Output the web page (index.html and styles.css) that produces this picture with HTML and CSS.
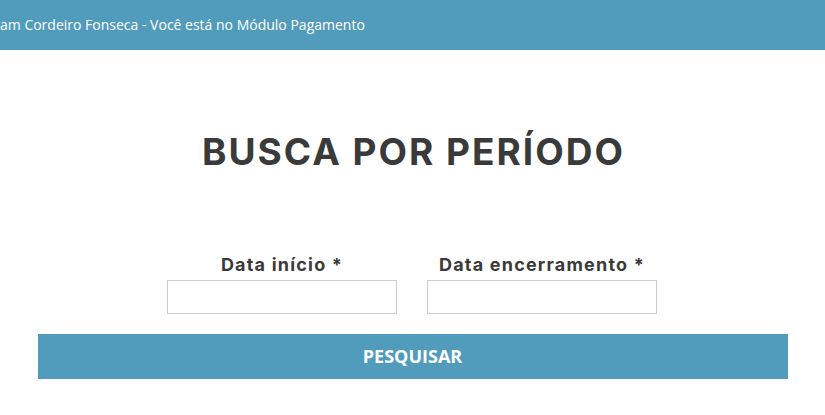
FILE: index.html
```html
<!DOCTYPE html>
<html lang="pt-BR">
<head>
<meta charset="utf-8">
<title>Busca por período</title>
<link rel="stylesheet" href="styles.css">
</head>
<body>
<header class="topbar">
  <span class="topbar-text">am Cordeiro Fonseca - Você está no Módulo Pagamento</span>
</header>
<main class="content">
  <h1 class="title">BUSCA POR PERÍODO</h1>
  <form class="search-form">
    <div class="fields">
      <div class="field">
        <label class="field-label" for="inicio">Data início *</label>
        <input class="field-input" id="inicio" type="text">
      </div>
      <div class="field">
        <label class="field-label" for="fim">Data encerramento *</label>
        <input class="field-input" id="fim" type="text">
      </div>
    </div>
    <button class="submit" type="button">PESQUISAR</button>
  </form>
</main>
</body>
</html>
```
FILE: styles.css
```css
html, body {
  margin: 0;
  padding: 0;
  background: #ffffff;
}
body {
  font-family: "Open Sans", "Liberation Sans", sans-serif;
  overflow: hidden;
}
.topbar {
  height: 50px;
  background: #519bbc;
  display: flex;
  align-items: center;
  white-space: nowrap;
}
.topbar-text {
  color: #ffffff;
  font-size: 14px;
  padding-bottom: 2px;
}
.content {
  display: flex;
  flex-direction: column;
  align-items: center;
}
.title {
  margin: 80px 0 0;
  font-family: Inter, "Noto Sans", sans-serif;
  font-weight: 700;
  font-size: 37px;
  line-height: 44px;
  color: #3a3a3a;
  letter-spacing: 2px;
  padding-left: 2px;
}
.search-form {
  margin-top: 80px;
  display: flex;
  flex-direction: column;
  align-items: center;
}
.fields {
  display: flex;
  gap: 30px;
  margin-right: 1px;
}
.field {
  display: flex;
  flex-direction: column;
  align-items: center;
  width: 230px;
}
.field-label {
  font-family: Inter, "Noto Sans", sans-serif;
  font-weight: 700;
  font-size: 18px;
  line-height: 22px;
  color: #3a3a3a;
  margin-bottom: 4px;
  letter-spacing: 1.2px;
}
.field-input {
  box-sizing: border-box;
  width: 230px;
  height: 34px;
  border: 1px solid #cccccc;
  background: #fff;
  margin: 0;
  padding: 0 8px;
}
.submit {
  margin-top: 20px;
  width: 750px;
  height: 45px;
  border: 0;
  background: #519bbc;
  color: #ffffff;
  font-family: "Open Sans", "Liberation Sans", sans-serif;
  font-weight: 700;
  font-size: 18px;
  line-height: 24px;
  padding: 0 0 2px;
}
```
